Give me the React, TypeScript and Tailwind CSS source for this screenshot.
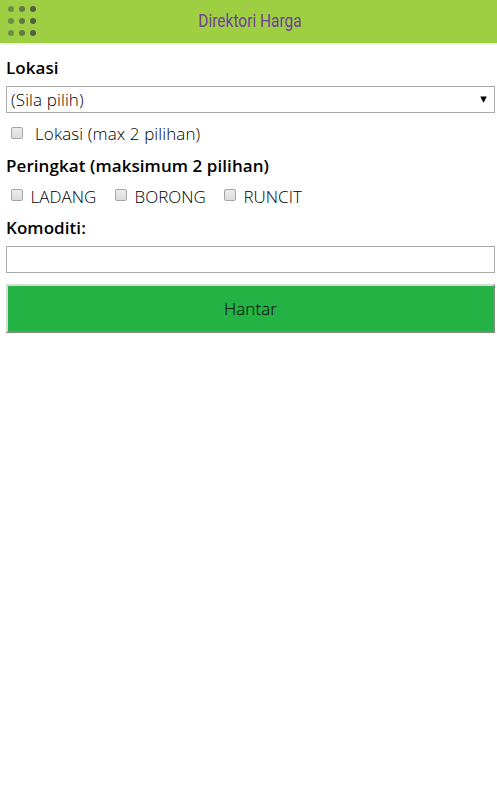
import React, { useState } from 'react';

const levels = [
  { name: 'LADANG', width: 'w-[104px]' },
  { name: 'BORONG', width: 'w-[109px]' },
  { name: 'RUNCIT', width: 'w-[90px]' },
];

const dots = [
  'bg-[#6d8c48]', 'bg-[#607945]', 'bg-[#536044]',
  'bg-[#6d8c48]', 'bg-[#607945]', 'bg-[#536044]',
  'bg-[#6d8c48]', 'bg-[#607945]', 'bg-[#536044]',
];

const boxClass =
  'm-0 block h-[12px] w-[12px] shrink-0 appearance-none rounded-[2px] border border-[#a5a5a5] bg-linear-to-b from-[#ececec] to-[#dcdcdc] checked:bg-[#777]';

const App = () => {
  const [komoditi, setKomoditi] = useState('');

  return (
    <div className="min-h-screen bg-white font-['Open_Sans',sans-serif] text-[17px] leading-[22px] font-light text-black">
      <header className="grid h-[43px] grid-cols-[1fr_auto_1fr] items-center bg-[#9ecf42] shadow-[0_1px_2px_rgba(0,0,0,0.15)]">
        <button aria-label="Menu" className="mb-[1px] ml-[8px] grid w-[28px] grid-cols-3 gap-x-[5px] gap-y-[6px]">
          {dots.map((color, i) => (
            <span key={i} className={`h-[6px] w-[6px] rounded-full ${color}`} />
          ))}
        </button>
        <h1 className="ml-[3px] w-[122px] scale-x-[0.86] pb-[2px] text-center font-[Roboto,sans-serif] text-[18px] font-normal whitespace-nowrap text-[#70409a]">
          Direktori Harga
        </h1>
        <span />
      </header>

      <form className="pt-[14px] pr-[2px] pl-[6px]" onSubmit={(e) => e.preventDefault()}>
        <label htmlFor="lokasi" className="block h-[29px] font-semibold tracking-[0.07px]">Lokasi</label>
        <div className="grid h-[27px]">
          <select id="lokasi" className="col-start-1 row-start-1 h-[27px] w-full appearance-none border border-[#a9a9a9] bg-white pl-[4px] tracking-[0.12px]">
            <option>(Sila pilih)</option>
          </select>
          <svg className="pointer-events-none col-start-1 row-start-1 mr-[8px] mb-[1px] self-center justify-self-end" width="7" height="7" viewBox="0 0 7 7">
            <path d="M0.3 0.5h6.4L3.9 6.3h-.8z" />
          </svg>
        </div>

        <label className="flex h-[42px] items-center pl-[5px]">
          <span className="pb-[2px]"><input type="checkbox" className={boxClass} /></span>
          <span className="ml-[12px] tracking-[0.1px]">Lokasi (max 2 pilihan)</span>
        </label>

        <p className="h-[30px] font-semibold tracking-[0.07px]">Peringkat (maksimum 2 pilihan)</p>
        <div className="flex h-[32px] pl-[5px]">
          {levels.map((level) => (
            <label key={level.name} className={`flex items-start ${level.width}`}>
              <span className="pt-[4px]"><input type="checkbox" className={boxClass} /></span>
              <span className="mt-[1px] ml-[7.5px]">{level.name}</span>
            </label>
          ))}
        </div>

        <label htmlFor="komoditi" className="block h-[29px] font-semibold tracking-[0.07px]">Komoditi:</label>
        <input
          id="komoditi"
          value={komoditi}
          onChange={(e) => setKomoditi(e.target.value)}
          className="block h-[27px] w-full border border-[#a9a9a9] bg-white px-1"
        />
        <button className="mt-[11px] block h-[49px] w-full border-2 border-t-[#d5ddd5] border-r-[#7d8b7d] border-b-[#7d8b7d] border-l-[#d5ddd5] bg-[#25b245] tracking-[0.1px]">
          Hantar
        </button>
      </form>
    </div>
  );
};

export default App;
